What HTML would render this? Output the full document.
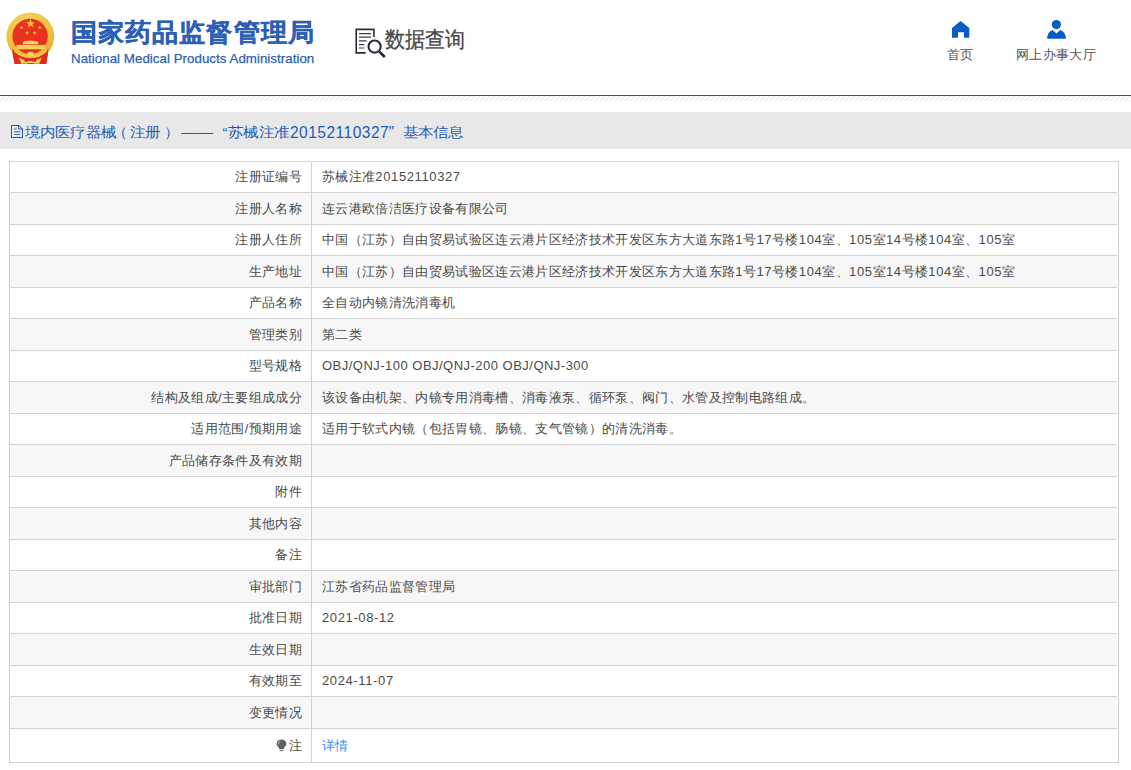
<!DOCTYPE html>
<html><head><meta charset="utf-8">
<style>
*{margin:0;padding:0;box-sizing:border-box}
html,body{width:1131px;height:770px;overflow:hidden;background:#fff;font-family:"Liberation Sans",sans-serif;color:#444}
.abs{position:absolute;white-space:nowrap}
.logo{position:absolute;left:0;top:0;width:70px;height:70px}
.cn{position:absolute;left:71px;top:15px;font-size:25.8px;font-weight:bold;color:#2c5fb6;letter-spacing:1.1px;-webkit-text-stroke:0.35px #2c5fb6;white-space:nowrap;line-height:36px;transform:scaleY(0.96);transform-origin:0 6.5px}
.en{position:absolute;left:71px;top:51px;letter-spacing:0.04px;-webkit-text-stroke:0.25px #2c5fb6;font-size:13.3px;color:#2c5fb6;white-space:nowrap;line-height:16px}
.sq{position:absolute;left:350px;top:24px;width:40px;height:36px}
.sqt{position:absolute;left:385px;top:23px;font-size:20px;color:#48484c;-webkit-text-stroke:0.3px #48484c;white-space:nowrap;line-height:32px;transform:scale(1,1.1);transform-origin:0 50%}
.nav{position:absolute;top:47px;text-align:center;font-size:13px;letter-spacing:0.33px;color:#555;line-height:16px;white-space:nowrap}
.line{position:absolute;left:0;top:95px;width:1131px;height:1px;background:#0a5fc0}
.hatch{position:absolute;left:0;top:96px;width:1131px;height:5px}
.tbar{position:absolute;left:0;top:112px;width:1131px;height:37px;background:#e8e8e8}
.ttl{position:absolute;top:119.6px;font-size:15px;letter-spacing:0.3px;transform:scaleY(0.9);transform-origin:0 13px;color:#1f5cb8;white-space:nowrap;line-height:24px}
.tbl{position:absolute;left:9px;top:161px;width:1110px;height:602px;border:1px solid #cfcfcf}
.r{position:absolute;left:10px;width:1107px;border-top:1px solid #d3d3d3;font-size:13px;letter-spacing:0.33px;color:#4a4a4a}
.rt{position:absolute;left:9px;width:1109px;font-size:13px;letter-spacing:0.33px;color:#4a4a4a}
.lb{position:absolute;left:0;width:293px;text-align:right;white-space:nowrap}
.vl{position:absolute;left:313px;white-space:nowrap}
.d{letter-spacing:0.62px}
.div{position:absolute;left:311px;top:161px;width:1px;height:601px;background:#d3d3d3}
.lk{color:#3d8ef5}
.bulb{display:inline-block;vertical-align:-2px;margin-right:2px}
</style></head><body>
<svg class="logo" viewBox="0 0 70 70">
  <defs>
    <radialGradient id="gd" cx="45%" cy="35%" r="65%"><stop offset="0" stop-color="#fde07a"/><stop offset="0.7" stop-color="#f3c03c"/><stop offset="1" stop-color="#e9ac2e"/></radialGradient>
  </defs>
  <path d="M11.8 50 L14.8 64 L22 63.6 L26 59 L35 59 L39 63.6 L46.2 64 L48.6 50 Z" fill="#e22a1e"/>
  <circle cx="30.35" cy="36.35" r="23.85" fill="url(#gd)"/>
  <circle cx="30.1" cy="36.35" r="17.7" fill="#e9321f"/>
  
  <polygon points="30.6,19.1 31.7,22.3 35.1,22.3 32.4,24.3 33.4,27.6 30.6,25.6 27.8,27.6 28.8,24.3 26.1,22.3 29.5,22.3" fill="#f0cd3a"/>
  <g fill="#eccb3c">
    <polygon points="21.5,25.6 22.1,26.9 23.4,27 22.4,27.9 22.7,29.3 21.5,28.6 20.3,29.3 20.6,27.9 19.6,27 20.9,26.9"/>
    <polygon points="39.7,25.6 40.3,26.9 41.6,27 40.6,27.9 40.9,29.3 39.7,28.6 38.5,29.3 38.8,27.9 37.8,27 39.1,26.9"/>
    <polygon points="27.1,31 27.7,32.3 29,32.4 28,33.3 28.3,34.7 27.1,34 25.9,34.7 26.2,33.3 25.2,32.4 26.5,32.3"/>
    <polygon points="34.6,31 35.2,32.3 36.5,32.4 35.5,33.3 35.8,34.7 34.6,34 33.4,34.7 33.7,33.3 32.7,32.4 34,32.3"/>
  </g>
  <path d="M22.9 42 Q30.5 39 38.2 42 L38.2 44.2 L22.9 44.2 Z" fill="#f8d868"/>
  <rect x="24.5" y="41.2" width="12" height="1" fill="#f3c64a"/>
  <rect x="16.4" y="44.9" width="28.4" height="4.4" fill="#f6d15a"/>
  <path d="M12.2 49 L14.6 64 L46.2 64 L48.4 49 Q40 56.5 30.5 56.5 Q21 56.5 12.2 49 Z" fill="#e3291e"/>
  <path d="M13.5 48.6 Q21 55.6 30.5 55.4 Q40 55.6 47.2 48.6 L46.6 51.8 Q39.5 58.4 30.5 58.2 Q21.5 58.4 14.2 51.8 Z" fill="#f2c443"/>
  <ellipse cx="30.6" cy="54.2" rx="3.4" ry="2.4" fill="#f8d862"/>
  <path d="M18.6 57.4 L21.6 64 L25.5 63 L24.2 60 Z M42 57.4 L39 64 L35.1 63 L36.4 60 Z" fill="#f3cd4a"/>
  <path d="M24 62.5 Q30.5 59.5 37 62.5 L36 64 Q30.5 61.8 25 64 Z" fill="#f6d458"/>
</svg>
<div class="cn">国家药品监督管理局</div>
<div class="en">National Medical Products Administration</div>
<svg class="sq" viewBox="350 24 40 36" width="40" height="36">
  <path d="M365.7 52.9 H356.2 V29.4 H373.9 V36.9" fill="none" stroke="#2b2b3d" stroke-width="1.6"/>
  <path d="M359 33.7 H371 M359 37.1 H371 M359 40.9 H366.6 M359 44.6 H364.3 M359 48 H364.3" stroke="#3a3a4c" stroke-width="1.2"/>
  <circle cx="374.6" cy="46.6" r="6.1" fill="none" stroke="#23233a" stroke-width="2"/>
  <path d="M379.3 51.6 L384.8 57" stroke="#23233a" stroke-width="2.6"/>
</svg>
<div class="sqt">数据查询</div>
<svg class="abs" style="left:950px;top:19px" width="22" height="21" viewBox="950 19 22 21">
  <path d="M960.5 21 L969.3 28 V37.8 H964 V32.2 H958 V37.8 H952 V28 Z" fill="#0a5cc2"/>
</svg>
<div class="nav" style="left:930px;width:60px">首页</div>
<svg class="abs" style="left:1044px;top:18px" width="25" height="23" viewBox="1044 18 25 23">
  <circle cx="1056.4" cy="24.6" r="4.6" fill="#0a5cc2"/>
  <path d="M1047.1 38.7 Q1047.5 31.5 1052.5 29.9 L1056.4 33.6 L1060.3 29.9 Q1065.5 31.5 1065.9 38.7 Z" fill="#0a5cc2"/>
</svg>
<div class="nav" style="left:1006px;width:100px">网上办事大厅</div>
<div class="line"></div>
<svg class="hatch" width="1131" height="5"><defs><pattern id="ht" width="5" height="5" patternUnits="userSpaceOnUse"><path d="M-1 6 L6 -1" stroke="#dedede" stroke-width="1"/></pattern></defs><rect width="1131" height="5" fill="url(#ht)"/></svg>
<div class="tbar"></div>
<svg class="abs" style="left:10px;top:124px" width="14" height="15" viewBox="10 124 14 15">
  <path d="M11.5 125.5 H18.8 L22.5 129.2 V137.5 H11.5 Z" fill="none" stroke="#1f5fc4" stroke-width="1.05"/>
  <path d="M18.4 125.5 V129 H22.5" fill="none" stroke="#1f5fc4" stroke-width="1"/>
  <path d="M14.2 129.1 H16.6 M14.2 131.8 H20 M14.2 134.5 H20" stroke="#2a64c4" stroke-width="1"/>
</svg>
<div class="ttl" style="left:24.5px">境内医疗器械</div>
<div class="ttl" style="left:112px">（</div>
<div class="ttl" style="left:130px">注册</div>
<div class="ttl" style="left:164px">）</div>
<div class="ttl" style="left:181px;letter-spacing:0;transform:scale(1.07,1);transform-origin:0 0">——</div>
<div class="ttl" style="left:222.5px">“</div>
<div class="ttl" style="left:228px">苏械注准</div>
<div class="ttl" style="left:290px;top:120.5px;letter-spacing:0.5px;font-size:15.5px;transform:scaleY(1.08);transform-origin:0 17px">20152110327</div>
<div class="ttl" style="left:388.5px;font-size:17px;top:121px;transform:none">”</div>
<div class="ttl" style="left:402.5px">基本信息</div>
<div class="tbl"></div>
<div class="r" style="top:161px;height:31px;background:#fff"></div><div class="rt" style="top:161.0px;height:31.5px;line-height:31.5px"><div class="lb">注册证编号</div><div class="vl">苏械注准<span class="d">20152110327</span></div></div>
<div class="r" style="top:192px;height:32px;background:#f7f7f7"></div><div class="rt" style="top:192.5px;height:31.5px;line-height:31.5px"><div class="lb">注册人名称</div><div class="vl">连云港欧倍洁医疗设备有限公司</div></div>
<div class="r" style="top:224px;height:31px;background:#fff"></div><div class="rt" style="top:224.0px;height:31.5px;line-height:31.5px"><div class="lb">注册人住所</div><div class="vl">中国（江苏）自由贸易试验区连云港片区经济技术开发区东方大道东路<span class="d">1</span>号<span class="d">17</span>号楼<span class="d">104</span>室、<span class="d">105</span>室<span class="d">14</span>号楼<span class="d">104</span>室、<span class="d">105</span>室</div></div>
<div class="r" style="top:255px;height:32px;background:#f7f7f7"></div><div class="rt" style="top:255.5px;height:31.5px;line-height:31.5px"><div class="lb">生产地址</div><div class="vl">中国（江苏）自由贸易试验区连云港片区经济技术开发区东方大道东路<span class="d">1</span>号<span class="d">17</span>号楼<span class="d">104</span>室、<span class="d">105</span>室<span class="d">14</span>号楼<span class="d">104</span>室、<span class="d">105</span>室</div></div>
<div class="r" style="top:287px;height:31px;background:#fff"></div><div class="rt" style="top:287.0px;height:31.5px;line-height:31.5px"><div class="lb">产品名称</div><div class="vl">全自动内镜清洗消毒机</div></div>
<div class="r" style="top:318px;height:32px;background:#f7f7f7"></div><div class="rt" style="top:318.5px;height:31.5px;line-height:31.5px"><div class="lb">管理类别</div><div class="vl">第二类</div></div>
<div class="r" style="top:350px;height:31px;background:#fff"></div><div class="rt" style="top:350.0px;height:31.5px;line-height:31.5px"><div class="lb">型号规格</div><div class="vl"><span class="d" style="letter-spacing:0.48px">OBJ/QNJ-100 OBJ/QNJ-200 OBJ/QNJ-300</span></div></div>
<div class="r" style="top:381px;height:32px;background:#f7f7f7"></div><div class="rt" style="top:381.5px;height:31.5px;line-height:31.5px"><div class="lb">结构及组成/主要组成成分</div><div class="vl">该设备由机架、内镜专用消毒槽、消毒液泵、循环泵、阀门、水管及控制电路组成。</div></div>
<div class="r" style="top:413px;height:31px;background:#fff"></div><div class="rt" style="top:413.0px;height:31.5px;line-height:31.5px"><div class="lb">适用范围/预期用途</div><div class="vl">适用于软式内镜（包括胃镜、肠镜、支气管镜）的清洗消毒。</div></div>
<div class="r" style="top:444px;height:32px;background:#f7f7f7"></div><div class="rt" style="top:444.5px;height:31.5px;line-height:31.5px"><div class="lb">产品储存条件及有效期</div><div class="vl"></div></div>
<div class="r" style="top:476px;height:31px;background:#fff"></div><div class="rt" style="top:476.0px;height:31.5px;line-height:31.5px"><div class="lb">附件</div><div class="vl"></div></div>
<div class="r" style="top:507px;height:32px;background:#f7f7f7"></div><div class="rt" style="top:507.5px;height:31.5px;line-height:31.5px"><div class="lb">其他内容</div><div class="vl"></div></div>
<div class="r" style="top:539px;height:31px;background:#fff"></div><div class="rt" style="top:539.0px;height:31.5px;line-height:31.5px"><div class="lb">备注</div><div class="vl"></div></div>
<div class="r" style="top:570px;height:32px;background:#f7f7f7"></div><div class="rt" style="top:570.5px;height:31.5px;line-height:31.5px"><div class="lb">审批部门</div><div class="vl">江苏省药品监督管理局</div></div>
<div class="r" style="top:602px;height:31px;background:#fff"></div><div class="rt" style="top:602.0px;height:31.5px;line-height:31.5px"><div class="lb">批准日期</div><div class="vl"><span class="d">2021-08-12</span></div></div>
<div class="r" style="top:633px;height:32px;background:#f7f7f7"></div><div class="rt" style="top:633.5px;height:31.5px;line-height:31.5px"><div class="lb">生效日期</div><div class="vl"></div></div>
<div class="r" style="top:665px;height:31px;background:#fff"></div><div class="rt" style="top:665.0px;height:31.5px;line-height:31.5px"><div class="lb">有效期至</div><div class="vl"><span class="d">2024-11-07</span></div></div>
<div class="r" style="top:696px;height:32px;background:#f7f7f7"></div><div class="rt" style="top:696.5px;height:31.5px;line-height:31.5px"><div class="lb">变更情况</div><div class="vl"></div></div>
<div class="r" style="top:728px;height:34px;background:#fff"></div><div class="rt" style="top:729px;height:34px;line-height:34px"><div class="lb"><svg class="bulb" width="11" height="13" viewBox="0 0 10 13" preserveAspectRatio="none"><path d="M5 0.6C2.4 0.6 0.6 2.5 0.6 4.8c0 1.7 1 2.8 2 3.6L3 10.2h4l0.4-1.8c1-0.8 2-1.9 2-3.6C9.4 2.5 7.6 0.6 5 0.6z" fill="#5f5f63"/><rect x="3.2" y="11" width="3.6" height="1.2" rx="0.5" fill="#8a8a8e"/><path d="M2.2 5.5 Q2 3 4 1.9" stroke="#c9d3e0" stroke-width="0.8" fill="none"/></svg>注</div><div class="vl"><span class="lk">详情</span></div></div>
<div class="div"></div>
</body></html>
